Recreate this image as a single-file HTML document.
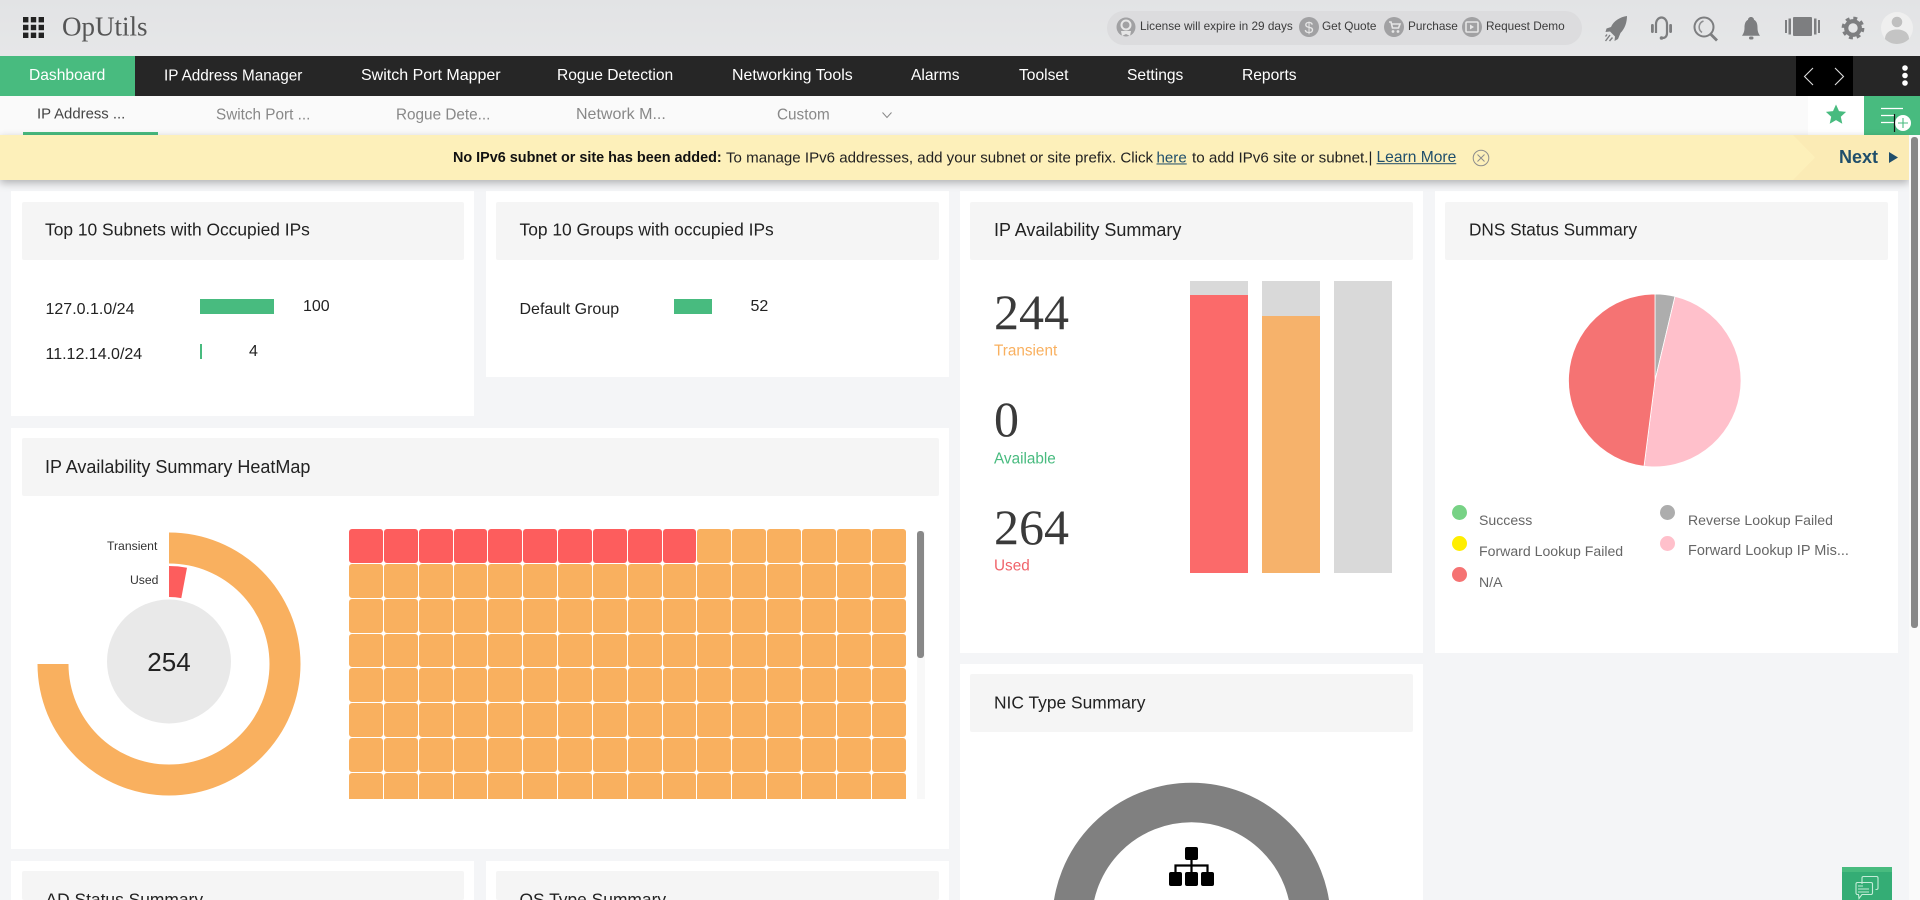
<!DOCTYPE html>
<html lang="en">
<head>
<meta charset="utf-8">
<title>OpUtils Dashboard</title>
<style>
html,body{margin:0;padding:0;width:1920px;height:900px;overflow:hidden;background:#f4f5f7;font-family:"Liberation Sans",Arial,sans-serif;color:#222}
#page{position:relative;width:1920px;height:900px;overflow:hidden;background:#f4f5f7}
.a{position:absolute}
.t{position:absolute;white-space:nowrap;line-height:1;transform:translateY(-50%)}
#hd{left:0;top:0;width:1920px;height:56px;background:linear-gradient(#e2e3e5,#e6e7e8)}
#pill{left:1107px;top:11px;width:475px;height:34px;border-radius:17px;background:#dcdcde}
.pt{font-size:11.8px;color:#3c3c3c;top:27px}
#nav{left:0;top:56px;width:1920px;height:40px;background:#262626}
.n{font-size:15.6px;color:#fff;top:76px}
#sub{left:0;top:96px;width:1920px;height:39px;background:#fafafa}
.s{font-size:15.3px;color:#888;top:115px}
#ban{left:0;top:135px;width:1909px;height:45px;background:#fdf0ba;box-shadow:0 3px 8px rgba(0,0,0,.28)}
.b{font-size:15.1px;color:#222;top:158px}
.b.l{color:#1f4e6b;text-decoration:underline}
.p{position:absolute;background:#fff}
.h{position:absolute;background:#f5f5f5;border-radius:2px;height:58px}
.ti{font-size:17.4px;color:#222}
.ti.w{font-size:18px}
.v{font-size:16px;color:#222}
.num{font-family:"Liberation Serif",serif;font-size:50px;color:#3a3a3a;font-weight:normal}
.lb{font-size:15.3px}
.lg{font-size:14.1px;color:#666}
.dot{position:absolute;width:15px;height:15px;border-radius:50%}
#grid{left:348.5px;top:529px;width:558px;height:270px;overflow:hidden;display:grid;grid-template-columns:repeat(16,34.85px);grid-auto-rows:34.85px}
#grid i{display:block;background:#f9b05f;border-radius:3px;margin:0 .5px 1px .5px}
#grid i.r{background:#fd5d5d}
#low{left:0;top:861px;width:960px;height:39px;overflow:hidden}
</style>
</head>
<body>
<div id="page">
<div class="a" id="hd"></div>
<svg class="a" style="left:23px;top:17px" width="21" height="21" viewBox="0 0 21 21" fill="#222"><rect width="5.4" height="5.4"/><rect x="7.8" width="5.4" height="5.4"/><rect x="15.6" width="5.4" height="5.4"/><rect y="7.8" width="5.4" height="5.4"/><rect x="7.8" y="7.8" width="5.4" height="5.4"/><rect x="15.6" y="7.8" width="5.4" height="5.4"/><rect y="15.6" width="5.4" height="5.4"/><rect x="7.8" y="15.6" width="5.4" height="5.4"/><rect x="15.6" y="15.6" width="5.4" height="5.4"/></svg>
<span class="t" style="left:62px;top:27px;font-family:'Liberation Serif',serif;font-size:27px;color:#555">OpUtils</span>
<div class="a" id="pill"></div>
<svg class="a" style="left:1107px;top:11px" width="475" height="34" viewBox="1107 11 475 34">
<g fill="#a1a1a3"><circle cx="1126" cy="27" r="9.5"/><circle cx="1309" cy="27" r="10"/><circle cx="1394" cy="27" r="10"/><circle cx="1472" cy="27" r="10"/></g>
<circle cx="1126" cy="25" r="4.5" fill="none" stroke="#e6e6e6" stroke-width="2"/><path d="M1121 31l1 5 4-2 4 2 1-5z" fill="#e6e6e6"/>
<path d="M1389 22h2l1.5 6h6l1.5-4h-8" fill="none" stroke="#e6e6e6" stroke-width="1.6"/><circle cx="1393" cy="31.5" r="1.4" fill="#e6e6e6"/><circle cx="1398" cy="31.5" r="1.4" fill="#e6e6e6"/>
<rect x="1466" y="22" width="12" height="10" rx="1" fill="none" stroke="#e6e6e6" stroke-width="1.6"/><path d="M1470 24.5l4 2.5-4 2.5z" fill="#e6e6e6"/>
<text x="1309" y="33" font-family="Liberation Sans,sans-serif" font-size="16" fill="#e6e6e6" text-anchor="middle">$</text>
</svg>
<span class="t pt" style="left:1140px">License will expire in 29 days</span>
<span class="t pt" style="left:1322px">Get Quote</span>
<span class="t pt" style="left:1408px">Purchase</span>
<span class="t pt" style="left:1486px">Request Demo</span>
<svg class="a" style="left:1600px;top:8px" width="320" height="40" viewBox="1600 8 320 40">
<g fill="#7d7e80">
<path d="M1627 16C1620 17 1613.500 21 1611 27L1606.500 28.500 1605.500 32 1610 31.500 1615 36.500 1614.500 41 1618 39 1620.500 33C1625 28.500 1627 22 1627 16z"/>
<path d="M1607 34.500l-1.500 2M1610 35l-4.500 6M1612.500 37.500l-3 3.500" fill="none" stroke="#7d7e80" stroke-width="1.400"/>
<rect x="1651" y="24" width="2.800" height="9" rx="1.200"/><rect x="1669.200" y="24" width="2.800" height="9" rx="1.200"/>
<path d="M1656 33V24a5.500 6.500 0 0 1 11 0v9c0 3-1.500 5-4.500 5" fill="none" stroke="#7d7e80" stroke-width="2.200"/><circle cx="1661.500" cy="38" r="1.800"/>
<circle cx="1704" cy="27" r="9.500" fill="none" stroke="#7d7e80" stroke-width="2"/>
<path d="M1703.500 21a6.500 6.500 0 0 0 -1.500 11.500" fill="none" stroke="#8f9092" stroke-width="1.600"/>
<path d="M1710.500 34l6.500 6.500" stroke="#7d7e80" stroke-width="2.800" fill="none"/>
<path d="M1751 17c1.800 0 3 1.300 3 2.800 2.800 1.500 3.500 4.500 3.500 8 0 4 1.200 6 2.500 8h-18c1.300-2 2.500-4 2.500-8 0-3.500.7-6.500 3.500-8 0-1.500 1.200-2.800 3-2.800z"/><rect x="1749" y="36.500" width="4.500" height="3" rx="1.500"/>
<rect x="1793" y="17" width="19" height="19" rx="1"/>
<rect x="1785" y="20" width="2" height="13"/><rect x="1788.500" y="18.500" width="2.500" height="16"/><rect x="1814" y="18.500" width="2.500" height="16"/><rect x="1818" y="20" width="2" height="13"/>
</g>
<circle cx="1853" cy="28" r="6.800" fill="none" stroke="#7d7e80" stroke-width="4.200"/>
<circle cx="1853" cy="28" r="9.800" fill="none" stroke="#7d7e80" stroke-width="3.200" stroke-dasharray="3.900 3.800"/>
<circle cx="1897" cy="28" r="16" fill="#efefef"/>
<circle cx="1897" cy="22" r="5.300" fill="#bfbfbf"/>
<path d="M1885 39c0-6 5-9.500 12-9.500s12 3.500 12 9.500c-3 3-7 5-12 5s-9-2-12-5z" fill="#c4c4c4"/>
</svg>

<div class="a" id="nav"></div>
<div class="a" style="left:0;top:56px;width:135px;height:40px;background:#48bb7f"></div>
<span class="t n" style="left:29px">Dashboard</span>
<span class="t n" style="left:164px;font-size:15.3px">IP Address Manager</span>
<span class="t n" style="left:361px;font-size:16px">Switch Port Mapper</span>
<span class="t n" style="left:557px">Rogue Detection</span>
<span class="t n" style="left:732px;font-size:15.9px">Networking Tools</span>
<span class="t n" style="left:911px">Alarms</span>
<span class="t n" style="left:1019px">Toolset</span>
<span class="t n" style="left:1127px">Settings</span>
<span class="t n" style="left:1242px">Reports</span>
<div class="a" style="left:1796px;top:56px;width:57px;height:40px;background:#000"></div>
<svg class="a" style="left:1796px;top:56px" width="124" height="40" viewBox="1796 56 124 40">
<path d="M1813 68l-8.500 8.500 8.500 8.500M1835 68l8.500 8.500-8.500 8.500" fill="none" stroke="#ddd" stroke-width="1.100"/>
<circle cx="1905" cy="68" r="2.800" fill="#fff"/><circle cx="1905" cy="75.500" r="2.800" fill="#fff"/><circle cx="1905" cy="83" r="2.800" fill="#fff"/>
</svg>

<div class="a" id="sub"></div>
<span class="t s" style="left:37px;color:#444;font-size:14.9px">IP Address ...</span>
<div class="a" style="left:23px;top:132px;width:135px;height:3px;background:#48bb7f"></div>
<span class="t s" style="left:216px">Switch Port ...</span>
<span class="t s" style="left:396px">Rogue Dete...</span>
<span class="t s" style="left:576px;font-size:16px">Network M...</span>
<span class="t s" style="left:777px">Custom</span>
<svg class="a" style="left:881px;top:111px" width="12" height="8" viewBox="0 0 12 8"><path d="M1.500 1.500l4.500 5 4.500-5" fill="none" stroke="#888" stroke-width="1"/></svg>
<div class="a" style="left:1808px;top:96px;width:56px;height:39px;background:#fff"></div>
<div class="a" style="left:1864px;top:96px;width:56px;height:39px;background:#48bb7f"></div>
<svg class="a" style="left:1808px;top:96px" width="112" height="39" viewBox="1808 96 112 39">
<path d="M1836 104.500l3 6.600 7.100.8-5.300 4.800 1.500 7-6.300-3.600-6.300 3.600 1.500-7-5.300-4.800 7.100-.8z" fill="#48bb7f"/>
<path d="M1881 108.500h22M1881 115.500h14M1881 122.500h14" stroke="#fff" stroke-width="1.200"/>
<circle cx="1903" cy="123" r="8" fill="#fff"/>
<path d="M1898 123h10M1903 118v10" stroke="#48bb7f" stroke-width="1.100"/>
<path d="M1894.500 114v18" stroke="#111" stroke-width="1.200"/>
</svg>

<div class="p" style="left:11px;top:191px;width:463px;height:225px"></div>
<div class="h" style="left:22px;top:202px;width:442px"></div>
<span class="t ti" style="left:45px;top:230px">Top 10 Subnets with Occupied IPs</span>
<span class="t v" style="left:45.5px;top:310px">127.0.1.0/24</span>
<div class="a" style="left:200px;top:299px;width:74px;height:15px;background:#48bb7f"></div>
<span class="t v" style="left:303px;top:307px">100</span>
<span class="t v" style="left:45.5px;top:355px">11.12.14.0/24</span>
<div class="a" style="left:200px;top:344px;width:2px;height:15px;background:#48bb7f"></div>
<span class="t v" style="left:249px;top:352px">4</span>

<div class="p" style="left:486px;top:191px;width:463px;height:186px"></div>
<div class="h" style="left:496px;top:202px;width:443px"></div>
<span class="t ti" style="left:519.5px;top:230px">Top 10 Groups with occupied IPs</span>
<span class="t v" style="left:519.5px;top:310px">Default Group</span>
<div class="a" style="left:674px;top:299px;width:38px;height:15px;background:#48bb7f"></div>
<span class="t v" style="left:750.5px;top:307px">52</span>

<div class="p" style="left:11px;top:428px;width:938px;height:421px"></div>
<div class="h" style="left:22px;top:438px;width:917px"></div>
<span class="t ti w" style="left:45px;top:467px">IP Availability Summary HeatMap</span>
<span class="t" style="left:107px;top:546px;font-size:12.2px;color:#333">Transient</span>
<span class="t" style="left:130px;top:580px;font-size:12.2px;color:#333">Used</span>
<div class="a" id="grid">
<i class="r"></i><i class="r"></i><i class="r"></i><i class="r"></i><i class="r"></i><i class="r"></i><i class="r"></i><i class="r"></i><i class="r"></i><i class="r"></i><i></i><i></i><i></i><i></i><i></i><i></i>
<i></i><i></i><i></i><i></i><i></i><i></i><i></i><i></i><i></i><i></i><i></i><i></i><i></i><i></i><i></i><i></i>
<i></i><i></i><i></i><i></i><i></i><i></i><i></i><i></i><i></i><i></i><i></i><i></i><i></i><i></i><i></i><i></i>
<i></i><i></i><i></i><i></i><i></i><i></i><i></i><i></i><i></i><i></i><i></i><i></i><i></i><i></i><i></i><i></i>
<i></i><i></i><i></i><i></i><i></i><i></i><i></i><i></i><i></i><i></i><i></i><i></i><i></i><i></i><i></i><i></i>
<i></i><i></i><i></i><i></i><i></i><i></i><i></i><i></i><i></i><i></i><i></i><i></i><i></i><i></i><i></i><i></i>
<i></i><i></i><i></i><i></i><i></i><i></i><i></i><i></i><i></i><i></i><i></i><i></i><i></i><i></i><i></i><i></i>
<i></i><i></i><i></i><i></i><i></i><i></i><i></i><i></i><i></i><i></i><i></i><i></i><i></i><i></i><i></i><i></i>
</div>
<div class="a" style="left:917px;top:531px;width:8px;height:268px;background:#f8f8f8"></div>
<div class="a" style="left:917px;top:531px;width:7px;height:127px;background:#888;border-radius:3px"></div>

<div class="a" id="low">
<div class="p" style="left:11px;top:0;width:463px;height:39px"></div>
<div class="h" style="left:22px;top:10px;width:442px;height:29px"></div>
<span class="t ti" style="left:45.5px;top:39px">AD Status Summary</span>
<div class="p" style="left:486px;top:0;width:463px;height:39px"></div>
<div class="h" style="left:496px;top:10px;width:443px;height:29px"></div>
<span class="t ti" style="left:519.5px;top:39px">OS Type Summary</span>
</div>

<div class="p" style="left:960px;top:191px;width:463px;height:462px"></div>
<div class="h" style="left:970px;top:202px;width:443px"></div>
<span class="t ti w" style="left:994px;top:230px">IP Availability Summary</span>
<span class="t num" style="left:994px;top:312px">244</span>
<span class="t lb" style="left:994px;top:351px;color:#f9b05f">Transient</span>
<span class="t num" style="left:994px;top:419px">0</span>
<span class="t lb" style="left:994px;top:459px;color:#48bb7f">Available</span>
<span class="t num" style="left:994px;top:527px">264</span>
<span class="t lb" style="left:994px;top:566px;color:#f0636a">Used</span>
<div class="a" style="left:1190px;top:281px;width:58px;height:292px;background:#d9d9d9"></div>
<div class="a" style="left:1190px;top:295px;width:58px;height:278px;background:#fb6a6a"></div>
<div class="a" style="left:1262px;top:281px;width:58px;height:292px;background:#d9d9d9"></div>
<div class="a" style="left:1262px;top:316px;width:58px;height:257px;background:#f6b26b"></div>
<div class="a" style="left:1334px;top:281px;width:58px;height:292px;background:#d9d9d9"></div>

<div class="p" style="left:1435px;top:191px;width:463px;height:462px"></div>
<div class="h" style="left:1445px;top:202px;width:443px"></div>
<span class="t ti" style="left:1469px;top:230px;font-size:17.2px">DNS Status Summary</span>
<div class="dot" style="left:1452px;top:505px;background:#77d285"></div>
<span class="t lg" style="left:1479px;top:520px">Success</span>
<div class="dot" style="left:1452px;top:536px;background:#ffee00"></div>
<span class="t lg" style="left:1479px;top:551px">Forward Lookup Failed</span>
<div class="dot" style="left:1452px;top:567px;background:#f57373"></div>
<span class="t lg" style="left:1479px;top:582px">N/A</span>
<div class="dot" style="left:1660px;top:505px;background:#adadad"></div>
<span class="t lg" style="left:1688px;top:520px">Reverse Lookup Failed</span>
<div class="dot" style="left:1660px;top:536px;background:#ffc0cb"></div>
<span class="t lg" style="left:1688px;top:551px;font-size:14.5px">Forward Lookup IP Mis...</span>

<div class="p" style="left:960px;top:664px;width:463px;height:236px"></div>
<div class="h" style="left:970px;top:674px;width:443px"></div>
<span class="t ti" style="left:994px;top:703px">NIC Type Summary</span>

<svg class="a" style="left:0;top:0" width="1920" height="900" viewBox="0 0 1920 900">
<path d="M169 532.500A131.500 131.500 0 1 1 37.500 664L68.500 664A100.500 100.500 0 1 0 169 563.500Z" fill="#f9b05f"/>
<path d="M169 566A98 98 0 0 1 187 567.700L181.300 598.100A67 67 0 0 0 169 597Z" fill="#fd5d5d"/>
<circle cx="169" cy="661.500" r="62" fill="#e9e9e9"/>
<text x="169" y="671" font-family="Liberation Sans,sans-serif" font-size="26" fill="#222" text-anchor="middle">254</text>
<path d="M1655 380.500L1655 294A86.500 86.500 0 0 1 1675 296.400Z" fill="#adadad" stroke="#fff" stroke-width=".8"/>
<path d="M1655 380.500L1675 296.400A86.500 86.500 0 0 1 1644 466.300Z" fill="#ffc0cb" stroke="#fff" stroke-width=".8"/>
<path d="M1655 380.500L1644 466.300A86.500 86.500 0 0 1 1655 294Z" fill="#f57373" stroke="#fff" stroke-width=".8"/>
<circle cx="1191.500" cy="922" r="119.500" fill="none" stroke="#808080" stroke-width="39.500"/>
<g fill="#000"><rect x="1185" y="847" width="13" height="13" rx="2"/><rect x="1169" y="872" width="13" height="14" rx="2"/><rect x="1185" y="872" width="13" height="14" rx="2"/><rect x="1201" y="872" width="13" height="14" rx="2"/></g>
<path d="M1191.500 860v12M1175.500 872v-6.500h32v6.500" fill="none" stroke="#000" stroke-width="2.200"/>
</svg>

<div class="a" id="ban"></div>
<svg class="a" style="left:1790px;top:135px" width="119" height="45" viewBox="1790 135 119 45"><path d="M1793 135l22 22.500-22 22.500h116v-45z" fill="#fbebb5"/><path d="M1889 152l9 5.500-9 5.500z" fill="#1f4e6b"/></svg>
<span class="t b" style="left:453px;font-weight:bold;font-size:14.4px;color:#111">No IPv6 subnet or site has been added:</span>
<span class="t b" style="left:726px">To manage IPv6 addresses, add your subnet or site prefix. Click</span>
<span class="t b l" style="left:1156.5px">here</span>
<span class="t b" style="left:1192px;font-size:15.2px">to add IPv6 site or subnet.|</span>
<span class="t b l" style="left:1376.5px;font-size:15.6px">Learn More</span>
<svg class="a" style="left:1472px;top:149px" width="18" height="18" viewBox="0 0 18 18"><circle cx="9" cy="9" r="7.800" fill="none" stroke="#8d8d8d" stroke-width="1"/><path d="M5.500 5.500l7 7M12.500 5.500l-7 7" stroke="#8d8d8d" stroke-width="1"/></svg>
<span class="t" style="left:1839px;top:157px;font-size:18px;font-weight:bold;color:#1f4e6b">Next</span>

<div class="a" style="left:1909px;top:135px;width:11px;height:765px;background:#fafafa"></div>
<div class="a" style="left:1911px;top:137px;width:7px;height:491px;background:#888;border-radius:3px"></div>

<div class="a" style="left:1842px;top:867px;width:50px;height:33px;background:#34ad75;border-top:5px solid #48bb7f;box-sizing:border-box"></div>
<svg class="a" style="left:1842px;top:867px" width="50" height="33" viewBox="1842 867 50 33" fill="none" stroke="#c5ecd8" stroke-width="1.100">
<path d="M1862 884v-6a1.500 1.500 0 0 1 1.500-1.500h13a1.500 1.500 0 0 1 1.500 1.500v10a1.500 1.500 0 0 1-1.500 1.500h-1"/>
<path d="M1857 882.500h14a1.500 1.500 0 0 1 1.500 1.500v9a1.500 1.500 0 0 1-1.500 1.500h-9l-3 4-.5-4h-1a1.500 1.500 0 0 1-1.500-1.500v-9a1.500 1.500 0 0 1 1.500-1.500z"/>
<path d="M1858 886h5M1858 889h11M1858 892h11"/>
</svg>
</div>
</body>
</html>
